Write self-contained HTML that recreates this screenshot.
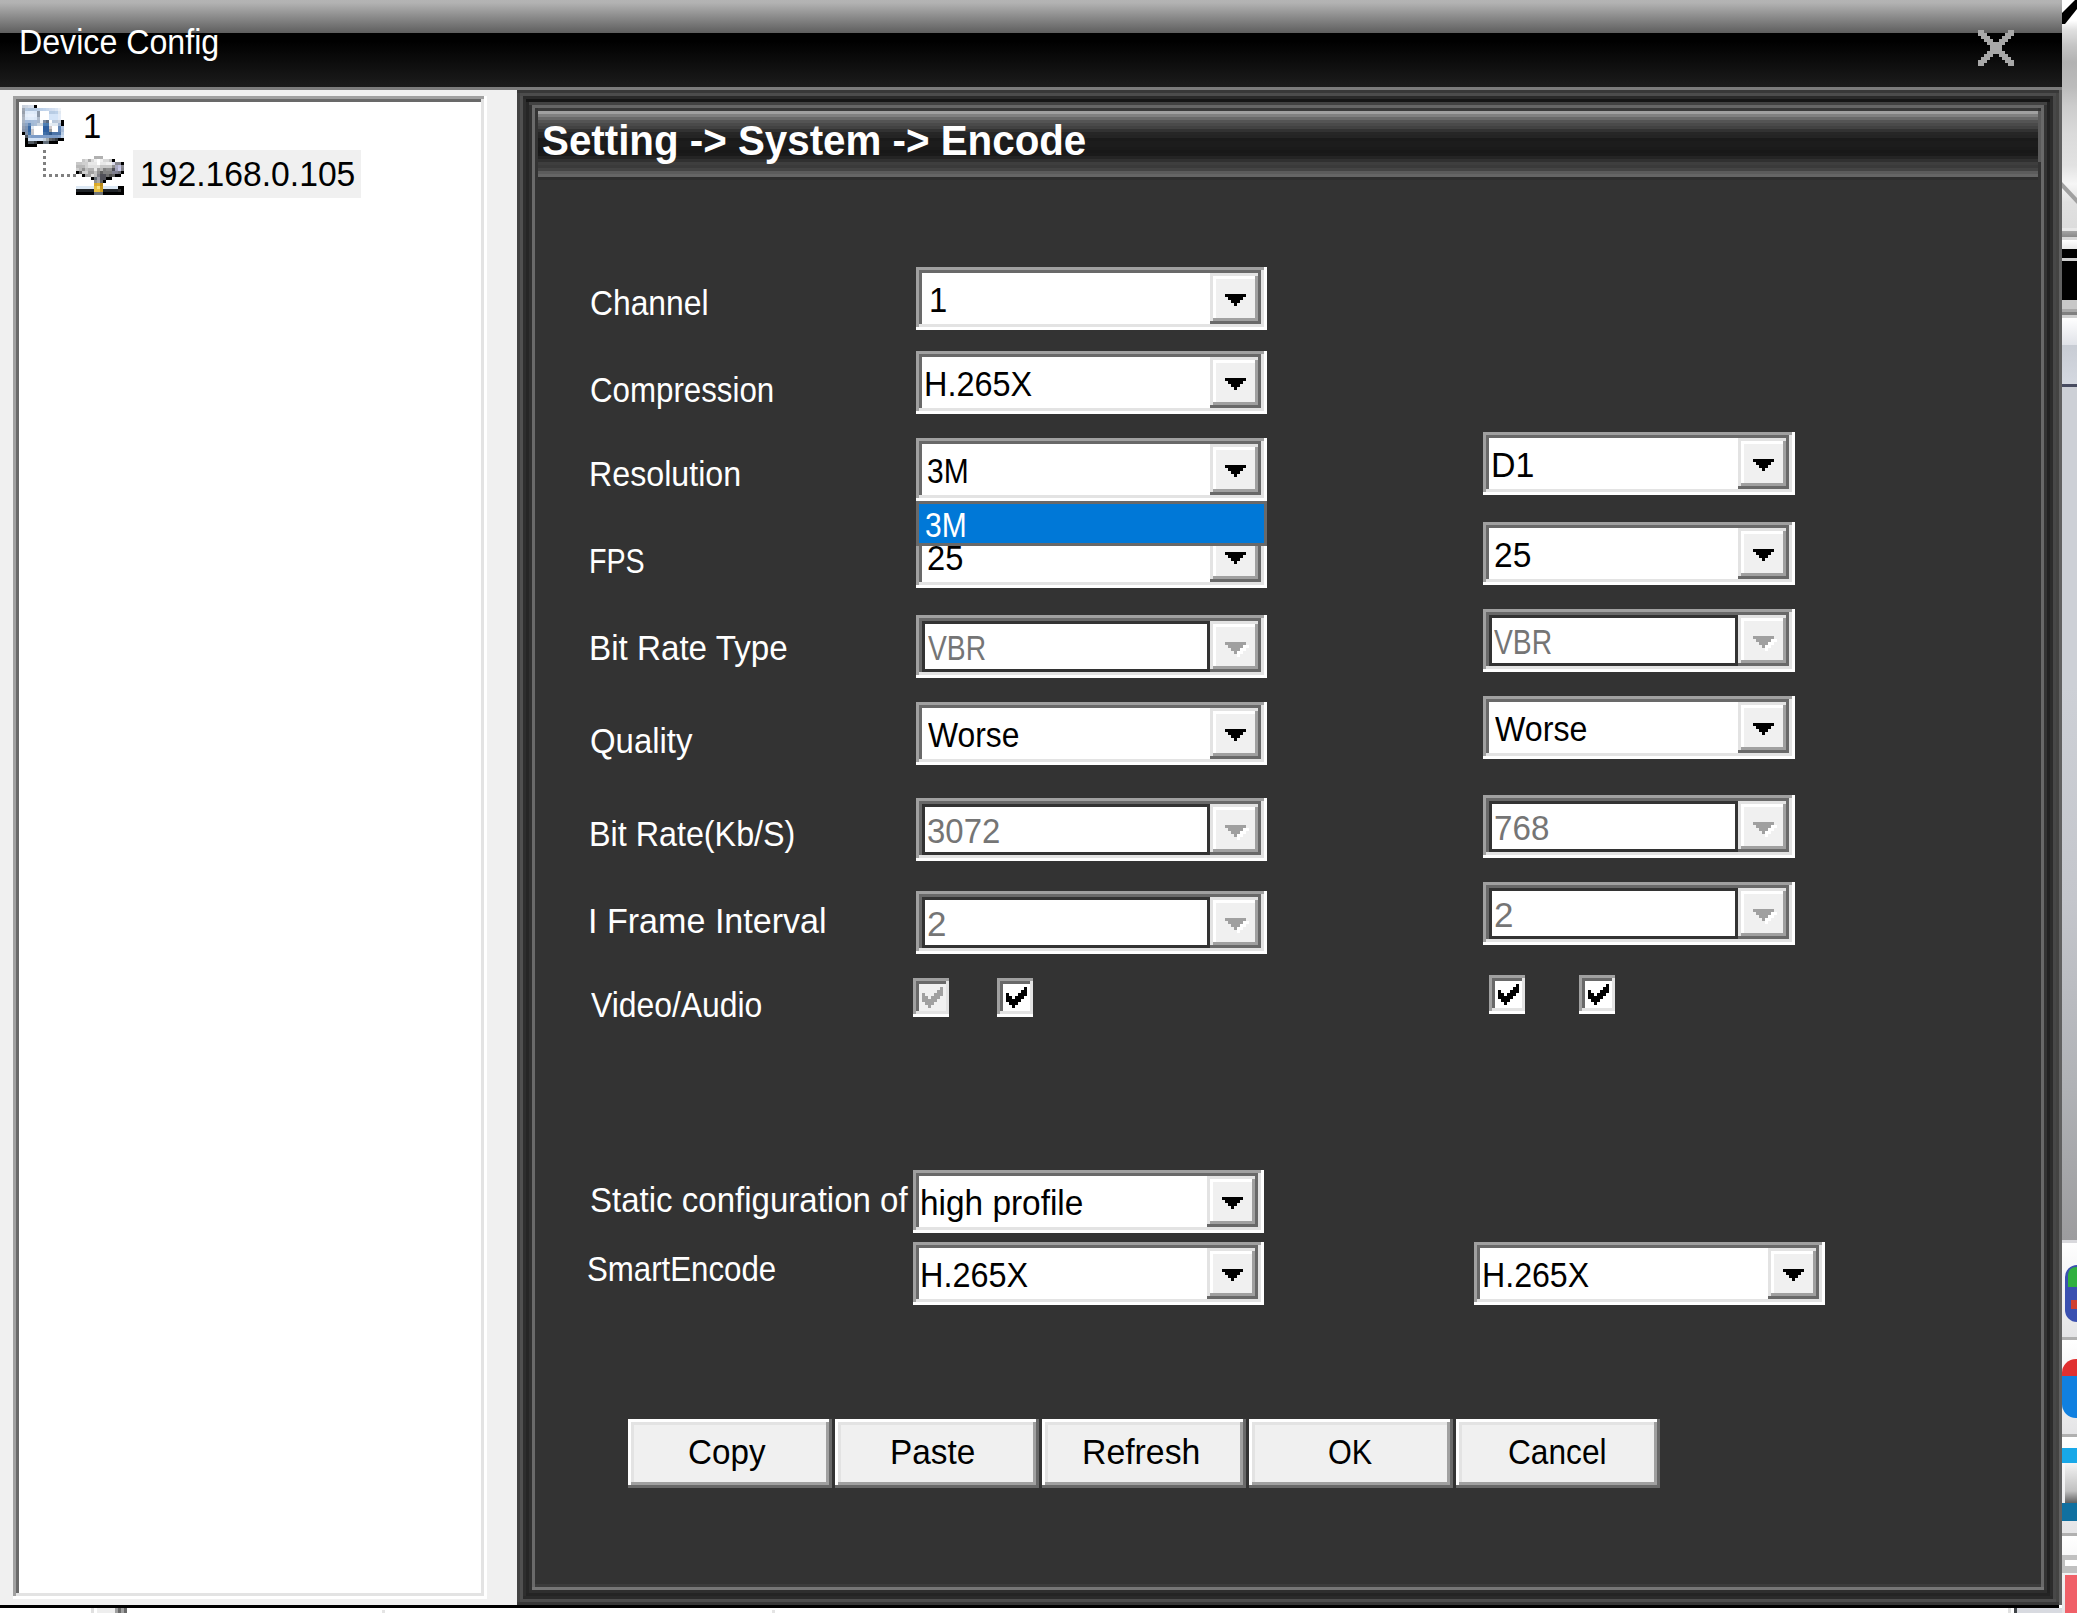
<!DOCTYPE html>
<html><head><meta charset="utf-8"><title>Device Config</title><style>
html,body{margin:0;padding:0}
body{width:2077px;height:1613px;overflow:hidden;background:#fff;position:relative;font-family:"Liberation Sans",sans-serif}
div,span.t,svg.a{position:absolute;display:block}
span.t{white-space:pre;transform-origin:0 0}
.sunk{box-shadow:inset -3px -3px 0 #fff,inset 3px 3px 0 #a0a0a0,inset -6px -6px 0 #e3e3e3,inset 6px 6px 0 #696969}
.rais{box-shadow:inset -3px -3px 0 #696969,inset 3px 3px 0 #e3e3e3,inset -6px -6px 0 #a0a0a0,inset 6px 6px 0 #fff}
.btn{box-shadow:inset -3px -3px 0 #696969,inset 3px 3px 0 #fff,inset -6px -6px 0 #a0a0a0,inset 6px 6px 0 #e3e3e3}
.chk{box-shadow:inset 0 -3px 0 #fff,inset 3px 3px 0 #a0a0a0,inset -3px -6px 0 #e3e3e3,inset 6px 6px 0 #696969}
</style></head><body>
<div style="left:0px;top:0px;width:2062px;height:33px;background:linear-gradient(#b4b4b4,#b2b2b2 9%,#5e5e5e);"></div>
<div style="left:0px;top:33px;width:2062px;height:54px;background:linear-gradient(#000,#000 15%,#1c1c1c);"></div>
<div style="left:0px;top:87px;width:2062px;height:3px;background:#7c7c7c;"></div>
<div style="left:0px;top:90px;width:517px;height:1515px;background:#f0f0f0;"></div>
<div class="sunk" style="left:13px;top:96px;width:474px;height:1503px;background:#fff;"></div>
<div style="left:517px;top:90px;width:1545px;height:1515px;background:#333;"></div>
<div style="left:517px;top:90px;width:3px;height:1515px;background:#424242;"></div>
<div style="left:520px;top:90px;width:3px;height:1515px;background:#505050;"></div>
<div style="left:523px;top:90px;width:3px;height:1515px;background:#2e2e2e;"></div>
<div style="left:526px;top:90px;width:3px;height:1515px;background:#262626;"></div>
<div style="left:529px;top:90px;width:3px;height:1515px;background:#303030;"></div>
<div style="left:532px;top:90px;width:3px;height:1515px;background:#6a6a6a;"></div>
<div style="left:2041px;top:90px;width:3px;height:1515px;background:#696969;"></div>
<div style="left:2044px;top:90px;width:3px;height:1515px;background:#343434;"></div>
<div style="left:2047px;top:90px;width:3px;height:1515px;background:#222222;"></div>
<div style="left:2050px;top:90px;width:3px;height:1515px;background:#2c2c2c;"></div>
<div style="left:2053px;top:90px;width:3px;height:1515px;background:#484848;"></div>
<div style="left:2056px;top:90px;width:3px;height:1515px;background:#444443;"></div>
<div style="left:2059px;top:90px;width:3px;height:1515px;background:#606060;"></div>
<div style="left:517px;top:90px;width:1542px;height:3px;background:#383838;"></div>
<div style="left:520px;top:93px;width:1536px;height:3px;background:#4c4c4c;"></div>
<div style="left:523px;top:96px;width:1530px;height:3px;background:#2a2a2a;"></div>
<div style="left:526px;top:99px;width:1524px;height:3px;background:#161616;"></div>
<div style="left:529px;top:102px;width:1518px;height:3px;background:#424242;"></div>
<div style="left:532px;top:105px;width:1512px;height:3px;background:#666666;"></div>
<div style="left:538px;top:108px;width:1500px;height:3px;background:#3a3a3a;"></div>
<div style="left:538px;top:111px;width:1500px;height:3px;background:#a0a0a0;"></div>
<div style="left:538px;top:114px;width:1500px;height:3px;background:#808080;"></div>
<div style="left:538px;top:117px;width:1500px;height:3px;background:#686868;"></div>
<div style="left:538px;top:120px;width:1500px;height:3px;background:#545454;"></div>
<div style="left:538px;top:123px;width:1500px;height:3px;background:#4a4a4a;"></div>
<div style="left:538px;top:126px;width:1500px;height:3px;background:#424242;"></div>
<div style="left:538px;top:129px;width:1500px;height:3px;background:#323232;"></div>
<div style="left:538px;top:132px;width:1500px;height:3px;background:#262626;"></div>
<div style="left:538px;top:135px;width:1500px;height:3px;background:#242424;"></div>
<div style="left:538px;top:138px;width:1500px;height:3px;background:#1a1a1a;"></div>
<div style="left:538px;top:141px;width:1500px;height:3px;background:#1c1c1c;"></div>
<div style="left:538px;top:144px;width:1500px;height:3px;background:#1c1c1c;"></div>
<div style="left:538px;top:147px;width:1500px;height:3px;background:#1a1a1a;"></div>
<div style="left:538px;top:150px;width:1500px;height:3px;background:#181818;"></div>
<div style="left:538px;top:153px;width:1500px;height:3px;background:#1a1a1a;"></div>
<div style="left:538px;top:156px;width:1500px;height:3px;background:#242424;"></div>
<div style="left:538px;top:159px;width:1500px;height:3px;background:#303030;"></div>
<div style="left:538px;top:162px;width:1500px;height:3px;background:#3e3e3e;"></div>
<div style="left:538px;top:165px;width:1500px;height:3px;background:#3a3a3a;"></div>
<div style="left:538px;top:168px;width:1500px;height:3px;background:#444444;"></div>
<div style="left:538px;top:171px;width:1500px;height:3px;background:#5c5c5c;"></div>
<div style="left:538px;top:174px;width:1500px;height:3px;background:#666666;"></div>
<div style="left:538px;top:177px;width:1500px;height:3px;background:#2e2e2e;"></div>
<div style="left:2038px;top:111px;width:3px;height:51px;background:#5a5a5a;"></div>
<div style="left:535px;top:1584px;width:1506px;height:3px;background:#3c3c3c;"></div>
<div style="left:532px;top:1587px;width:1512px;height:3px;background:#767676;"></div>
<div style="left:529px;top:1590px;width:1518px;height:3px;background:#2e2e2e;"></div>
<div style="left:526px;top:1593px;width:1524px;height:3px;background:#242424;"></div>
<div style="left:523px;top:1596px;width:1530px;height:3px;background:#2a2a2a;"></div>
<div style="left:520px;top:1599px;width:1536px;height:3px;background:#4e4e4e;"></div>
<div style="left:517px;top:1602px;width:1542px;height:3px;background:#383838;"></div>
<div style="left:0px;top:1605px;width:2059px;height:3px;background:#000;"></div>
<div style="left:91px;top:1608px;width:3px;height:5px;background:#e0e0e0;"></div>
<div style="left:97px;top:1608px;width:18px;height:5px;background:#eeeeee;"></div>
<div style="left:115px;top:1608px;width:3px;height:5px;background:#a0a0a0;"></div>
<div style="left:118px;top:1608px;width:3px;height:5px;background:#696969;"></div>
<div style="left:121px;top:1608px;width:3px;height:5px;background:#a0a0a0;"></div>
<div style="left:124px;top:1608px;width:3px;height:5px;background:#696969;"></div>
<div style="left:382px;top:1610px;width:3px;height:3px;background:#e4e4e4;"></div>
<div style="left:772px;top:1610px;width:3px;height:3px;background:#e4e4e4;"></div>
<div style="left:2008px;top:1608px;width:3px;height:5px;background:#e0e0e0;"></div>
<div style="left:2014px;top:1608px;width:3px;height:5px;background:#404448;"></div>
<div style="left:2017px;top:1608px;width:45px;height:5px;background:#d8dae0;"></div>
<svg class="a" style="left:1978px;top:30px" width="36" height="36" shape-rendering="crispEdges"><path d="M0 0h6v3h-6zM30 0h6v3h-6zM0 3h9v3h-9zM27 3h9v3h-9zM3 6h9v3h-9zM24 6h9v3h-9zM6 9h9v3h-9zM21 9h9v3h-9zM9 12h18v3h-18zM12 15h12v3h-12zM12 18h12v3h-12zM9 21h18v3h-18zM6 24h9v3h-9zM21 24h9v3h-9zM3 27h9v3h-9zM24 27h9v3h-9zM0 30h9v3h-9zM27 30h9v3h-9zM0 33h6v3h-6zM30 33h6v3h-6z" fill="#a8a8a8"/></svg>
<div style="left:133px;top:150px;width:228px;height:48px;background:#f0f0f0;"></div>
<svg class="a" style="left:0;top:0" width="100" height="200" shape-rendering="crispEdges"><path d="M43 150h3v3h-3zM43 156h3v3h-3zM43 162h3v3h-3zM43 168h3v3h-3zM43 174h3v3h-3zM49 174h3v3h-3zM55 174h3v3h-3zM61 174h3v3h-3zM67 174h3v3h-3zM73 174h3v3h-3z" fill="#808080"/></svg>
<svg class="a" style="left:22px;top:105px" width="42" height="42" shape-rendering="crispEdges"><rect x="0" y="0" width="3" height="3" fill="#c8d0dc"/><rect x="3" y="0" width="3" height="3" fill="#ccd4e0"/><rect x="6" y="0" width="3" height="3" fill="#d4dce8"/><rect x="9" y="0" width="3" height="3" fill="#d8e0ec"/><rect x="12" y="0" width="3" height="3" fill="#000000"/><rect x="0" y="3" width="3" height="3" fill="#a0a8b4"/><rect x="3" y="3" width="3" height="3" fill="#b4c8e0"/><rect x="6" y="3" width="3" height="3" fill="#b0c4dc"/><rect x="9" y="3" width="3" height="3" fill="#b0c4dc"/><rect x="12" y="3" width="3" height="3" fill="#b4c8e0"/><rect x="15" y="3" width="3" height="3" fill="#b8cce4"/><rect x="18" y="3" width="3" height="3" fill="#bcd0e8"/><rect x="21" y="3" width="3" height="3" fill="#c0d4ec"/><rect x="24" y="3" width="3" height="3" fill="#c8d8ec"/><rect x="27" y="3" width="3" height="3" fill="#d0dcf0"/><rect x="30" y="3" width="3" height="3" fill="#d4e0f0"/><rect x="33" y="3" width="3" height="3" fill="#dce6f4"/><rect x="36" y="3" width="3" height="3" fill="#eef2f8"/><rect x="0" y="6" width="3" height="3" fill="#98a0ac"/><rect x="3" y="6" width="3" height="3" fill="#dce8f8"/><rect x="6" y="6" width="3" height="3" fill="#e0ecfa"/><rect x="9" y="6" width="3" height="3" fill="#e0ecfa"/><rect x="12" y="6" width="3" height="3" fill="#dce8f8"/><rect x="15" y="6" width="3" height="3" fill="#8c98a8"/><rect x="18" y="6" width="3" height="3" fill="#ffffff"/><rect x="21" y="6" width="3" height="3" fill="#ffffff"/><rect x="24" y="6" width="3" height="3" fill="#ffffff"/><rect x="27" y="6" width="3" height="3" fill="#b8cce4"/><rect x="30" y="6" width="3" height="3" fill="#b8cce4"/><rect x="33" y="6" width="3" height="3" fill="#bcd0e8"/><rect x="36" y="6" width="3" height="3" fill="#e0e8f0"/><rect x="0" y="9" width="3" height="3" fill="#a8b0bc"/><rect x="3" y="9" width="3" height="3" fill="#e4eefa"/><rect x="6" y="9" width="3" height="3" fill="#e8f0fc"/><rect x="9" y="9" width="3" height="3" fill="#e8f0fc"/><rect x="12" y="9" width="3" height="3" fill="#e4eefa"/><rect x="15" y="9" width="3" height="3" fill="#8c98a8"/><rect x="18" y="9" width="3" height="3" fill="#ffffff"/><rect x="21" y="9" width="3" height="3" fill="#ffffff"/><rect x="24" y="9" width="3" height="3" fill="#ffffff"/><rect x="27" y="9" width="3" height="3" fill="#d4e4f8"/><rect x="30" y="9" width="3" height="3" fill="#d4e4f8"/><rect x="33" y="9" width="3" height="3" fill="#d4e4f8"/><rect x="36" y="9" width="3" height="3" fill="#e4ecf8"/><rect x="0" y="12" width="3" height="3" fill="#b0b8c4"/><rect x="3" y="12" width="3" height="3" fill="#dce8f8"/><rect x="6" y="12" width="3" height="3" fill="#e0ecfa"/><rect x="9" y="12" width="3" height="3" fill="#e0ecfa"/><rect x="12" y="12" width="3" height="3" fill="#dce8f8"/><rect x="15" y="12" width="3" height="3" fill="#b0bccc"/><rect x="18" y="12" width="3" height="3" fill="#ffffff"/><rect x="21" y="12" width="3" height="3" fill="#ffffff"/><rect x="24" y="12" width="3" height="3" fill="#ffffff"/><rect x="27" y="12" width="3" height="3" fill="#d4e4f8"/><rect x="30" y="12" width="3" height="3" fill="#d4e4f8"/><rect x="33" y="12" width="3" height="3" fill="#d4e4f8"/><rect x="36" y="12" width="3" height="3" fill="#e4ecf8"/><rect x="0" y="15" width="3" height="3" fill="#a8b4c4"/><rect x="3" y="15" width="3" height="3" fill="#a0b8d8"/><rect x="6" y="15" width="3" height="3" fill="#a0b8d8"/><rect x="9" y="15" width="3" height="3" fill="#a4bcd8"/><rect x="12" y="15" width="3" height="3" fill="#a8bcd8"/><rect x="15" y="15" width="3" height="3" fill="#a8b8cc"/><rect x="18" y="15" width="3" height="3" fill="#f0f4f8"/><rect x="21" y="15" width="3" height="3" fill="#7888a0"/><rect x="24" y="15" width="3" height="3" fill="#5c6c80"/><rect x="27" y="15" width="3" height="3" fill="#ffffff"/><rect x="30" y="15" width="3" height="3" fill="#b8c8dc"/><rect x="33" y="15" width="3" height="3" fill="#bcc8d8"/><rect x="36" y="15" width="3" height="3" fill="#c8d0dc"/><rect x="39" y="15" width="3" height="3" fill="#000000"/><rect x="0" y="18" width="3" height="3" fill="#98a8bc"/><rect x="3" y="18" width="3" height="3" fill="#8ca4c4"/><rect x="6" y="18" width="3" height="3" fill="#6088b8"/><rect x="9" y="18" width="3" height="3" fill="#a0b8d4"/><rect x="12" y="18" width="3" height="3" fill="#a8bcd4"/><rect x="15" y="18" width="3" height="3" fill="#c8d4e0"/><rect x="18" y="18" width="3" height="3" fill="#ccd4dc"/><rect x="21" y="18" width="3" height="3" fill="#5080b4"/><rect x="24" y="18" width="3" height="3" fill="#4c7cb0"/><rect x="27" y="18" width="3" height="3" fill="#e8eef4"/><rect x="30" y="18" width="3" height="3" fill="#e0e8f0"/><rect x="33" y="18" width="3" height="3" fill="#e0e8f0"/><rect x="36" y="18" width="3" height="3" fill="#a0b4d0"/><rect x="39" y="18" width="3" height="3" fill="#000000"/><rect x="0" y="21" width="3" height="3" fill="#909cb0"/><rect x="3" y="21" width="3" height="3" fill="#7c94b4"/><rect x="6" y="21" width="3" height="3" fill="#3868a4"/><rect x="9" y="21" width="3" height="3" fill="#e0e8f0"/><rect x="12" y="21" width="3" height="3" fill="#ffffff"/><rect x="15" y="21" width="3" height="3" fill="#ffffff"/><rect x="18" y="21" width="3" height="3" fill="#ffffff"/><rect x="21" y="21" width="3" height="3" fill="#3060a0"/><rect x="24" y="21" width="3" height="3" fill="#3060a0"/><rect x="27" y="21" width="3" height="3" fill="#d0c8c8"/><rect x="30" y="21" width="3" height="3" fill="#ffffff"/><rect x="33" y="21" width="3" height="3" fill="#ffffff"/><rect x="36" y="21" width="3" height="3" fill="#6084b4"/><rect x="39" y="21" width="3" height="3" fill="#b0c4e0"/><rect x="0" y="24" width="3" height="3" fill="#8894a8"/><rect x="3" y="24" width="3" height="3" fill="#7890b0"/><rect x="6" y="24" width="3" height="3" fill="#3868a4"/><rect x="9" y="24" width="3" height="3" fill="#c8c8cc"/><rect x="12" y="24" width="3" height="3" fill="#ffffff"/><rect x="15" y="24" width="3" height="3" fill="#ffffff"/><rect x="18" y="24" width="3" height="3" fill="#ffffff"/><rect x="21" y="24" width="3" height="3" fill="#3060a0"/><rect x="24" y="24" width="3" height="3" fill="#3060a0"/><rect x="27" y="24" width="3" height="3" fill="#a0a0a0"/><rect x="30" y="24" width="3" height="3" fill="#ffffff"/><rect x="33" y="24" width="3" height="3" fill="#ffffff"/><rect x="36" y="24" width="3" height="3" fill="#6084b4"/><rect x="39" y="24" width="3" height="3" fill="#a8bcd8"/><rect x="0" y="27" width="3" height="3" fill="#000000"/><rect x="3" y="27" width="3" height="3" fill="#8090a8"/><rect x="6" y="27" width="3" height="3" fill="#4878ac"/><rect x="9" y="27" width="3" height="3" fill="#c0c4cc"/><rect x="12" y="27" width="3" height="3" fill="#ffffff"/><rect x="15" y="27" width="3" height="3" fill="#ffffff"/><rect x="18" y="27" width="3" height="3" fill="#ffffff"/><rect x="21" y="27" width="3" height="3" fill="#4070a8"/><rect x="24" y="27" width="3" height="3" fill="#3c68a0"/><rect x="27" y="27" width="3" height="3" fill="#305888"/><rect x="30" y="27" width="3" height="3" fill="#4c74a8"/><rect x="33" y="27" width="3" height="3" fill="#4c74a8"/><rect x="36" y="27" width="3" height="3" fill="#4c74a8"/><rect x="39" y="27" width="3" height="3" fill="#b8cce4"/><rect x="3" y="30" width="3" height="3" fill="#505860"/><rect x="6" y="30" width="3" height="3" fill="#88a4c8"/><rect x="9" y="30" width="3" height="3" fill="#7c9cc8"/><rect x="12" y="30" width="3" height="3" fill="#7c9cc8"/><rect x="15" y="30" width="3" height="3" fill="#7c9cc8"/><rect x="18" y="30" width="3" height="3" fill="#7c9cc8"/><rect x="21" y="30" width="3" height="3" fill="#7c9cc8"/><rect x="24" y="30" width="3" height="3" fill="#7c9cc8"/><rect x="27" y="30" width="3" height="3" fill="#7c9cc8"/><rect x="30" y="30" width="3" height="3" fill="#7c9cc8"/><rect x="33" y="30" width="3" height="3" fill="#7c9cc8"/><rect x="36" y="30" width="3" height="3" fill="#88a4cc"/><rect x="39" y="30" width="3" height="3" fill="#c8d8ec"/><rect x="3" y="33" width="3" height="3" fill="#000000"/><rect x="6" y="33" width="3" height="3" fill="#d0e0f4"/><rect x="9" y="33" width="3" height="3" fill="#d0e0f4"/><rect x="12" y="33" width="3" height="3" fill="#d0e0f4"/><rect x="15" y="33" width="3" height="3" fill="#d0e0f4"/><rect x="18" y="33" width="3" height="3" fill="#d0e0f4"/><rect x="21" y="33" width="3" height="3" fill="#c0ccd8"/><rect x="24" y="33" width="3" height="3" fill="#a0a8ac"/><rect x="27" y="33" width="3" height="3" fill="#606468"/><rect x="30" y="33" width="3" height="3" fill="#50545c"/><rect x="33" y="33" width="3" height="3" fill="#383c40"/><rect x="36" y="33" width="3" height="3" fill="#000000"/><rect x="39" y="33" width="3" height="3" fill="#000000"/><rect x="3" y="36" width="3" height="3" fill="#000000"/><rect x="6" y="36" width="3" height="3" fill="#505860"/><rect x="9" y="36" width="3" height="3" fill="#505860"/><rect x="12" y="36" width="3" height="3" fill="#303438"/><rect x="15" y="36" width="3" height="3" fill="#000000"/><rect x="18" y="36" width="3" height="3" fill="#000000"/><rect x="21" y="36" width="3" height="3" fill="#606c78"/><rect x="24" y="36" width="3" height="3" fill="#606c78"/><rect x="27" y="36" width="3" height="3" fill="#000000"/><rect x="30" y="36" width="3" height="3" fill="#000000"/><rect x="33" y="36" width="3" height="3" fill="#000000"/><rect x="3" y="39" width="3" height="3" fill="#000000"/><rect x="6" y="39" width="3" height="3" fill="#000000"/><rect x="9" y="39" width="3" height="3" fill="#000000"/><rect x="12" y="39" width="3" height="3" fill="#000000"/></svg>
<svg class="a" style="left:76px;top:156px" width="48" height="39" shape-rendering="crispEdges"><rect x="18" y="0" width="3" height="3" fill="#b0b0b0"/><rect x="21" y="0" width="3" height="3" fill="#b0b0b0"/><rect x="24" y="0" width="3" height="3" fill="#b0b0b0"/><rect x="6" y="3" width="3" height="3" fill="#c8c8c8"/><rect x="9" y="3" width="3" height="3" fill="#d8d8d8"/><rect x="12" y="3" width="3" height="3" fill="#a8a8a8"/><rect x="15" y="3" width="3" height="3" fill="#d8d8d8"/><rect x="18" y="3" width="3" height="3" fill="#f0f0f0"/><rect x="21" y="3" width="3" height="3" fill="#ffffff"/><rect x="24" y="3" width="3" height="3" fill="#f0f0f0"/><rect x="27" y="3" width="3" height="3" fill="#d8d8d8"/><rect x="30" y="3" width="3" height="3" fill="#d8d8d8"/><rect x="33" y="3" width="3" height="3" fill="#c0c0c0"/><rect x="36" y="3" width="3" height="3" fill="#000000"/><rect x="0" y="6" width="3" height="3" fill="#c8c8c8"/><rect x="3" y="6" width="3" height="3" fill="#c8c8c8"/><rect x="6" y="6" width="3" height="3" fill="#d0d0d0"/><rect x="9" y="6" width="3" height="3" fill="#d0d0d0"/><rect x="12" y="6" width="3" height="3" fill="#e8e8e8"/><rect x="15" y="6" width="3" height="3" fill="#e8e8e8"/><rect x="18" y="6" width="3" height="3" fill="#e8e8e8"/><rect x="21" y="6" width="3" height="3" fill="#ffffff"/><rect x="24" y="6" width="3" height="3" fill="#e8e8e8"/><rect x="27" y="6" width="3" height="3" fill="#e8e8e8"/><rect x="30" y="6" width="3" height="3" fill="#f0f0f0"/><rect x="33" y="6" width="3" height="3" fill="#f0f0f0"/><rect x="36" y="6" width="3" height="3" fill="#d8d8e8"/><rect x="39" y="6" width="3" height="3" fill="#888890"/><rect x="42" y="6" width="3" height="3" fill="#888890"/><rect x="45" y="6" width="3" height="3" fill="#000000"/><rect x="0" y="9" width="3" height="3" fill="#b8b8b8"/><rect x="3" y="9" width="3" height="3" fill="#b8b8b8"/><rect x="6" y="9" width="3" height="3" fill="#b8b8b8"/><rect x="9" y="9" width="3" height="3" fill="#d0d0d0"/><rect x="12" y="9" width="3" height="3" fill="#e0e0e0"/><rect x="15" y="9" width="3" height="3" fill="#e0e0e0"/><rect x="18" y="9" width="3" height="3" fill="#e0e0e0"/><rect x="21" y="9" width="3" height="3" fill="#e0e0e0"/><rect x="24" y="9" width="3" height="3" fill="#c8c8c8"/><rect x="27" y="9" width="3" height="3" fill="#c8c8c8"/><rect x="30" y="9" width="3" height="3" fill="#c8c8c8"/><rect x="33" y="9" width="3" height="3" fill="#c8c8c8"/><rect x="36" y="9" width="3" height="3" fill="#909090"/><rect x="39" y="9" width="3" height="3" fill="#a8a8c0"/><rect x="42" y="9" width="3" height="3" fill="#c0c0e0"/><rect x="45" y="9" width="3" height="3" fill="#888890"/><rect x="0" y="12" width="3" height="3" fill="#d0d0d0"/><rect x="3" y="12" width="3" height="3" fill="#b8b8b8"/><rect x="6" y="12" width="3" height="3" fill="#909090"/><rect x="9" y="12" width="3" height="3" fill="#c0c0c0"/><rect x="12" y="12" width="3" height="3" fill="#b0b0b0"/><rect x="15" y="12" width="3" height="3" fill="#b0b0b0"/><rect x="18" y="12" width="3" height="3" fill="#e8e8e8"/><rect x="21" y="12" width="3" height="3" fill="#a0a0a0"/><rect x="24" y="12" width="3" height="3" fill="#b8b8b8"/><rect x="27" y="12" width="3" height="3" fill="#808080"/><rect x="30" y="12" width="3" height="3" fill="#909090"/><rect x="33" y="12" width="3" height="3" fill="#909090"/><rect x="36" y="12" width="3" height="3" fill="#505058"/><rect x="39" y="12" width="3" height="3" fill="#a0a0b8"/><rect x="42" y="12" width="3" height="3" fill="#c8c8e8"/><rect x="45" y="12" width="3" height="3" fill="#808088"/><rect x="0" y="15" width="3" height="3" fill="#000000"/><rect x="3" y="15" width="3" height="3" fill="#606060"/><rect x="6" y="15" width="3" height="3" fill="#d0d0d0"/><rect x="9" y="15" width="3" height="3" fill="#d0d0d0"/><rect x="12" y="15" width="3" height="3" fill="#a0a0a0"/><rect x="15" y="15" width="3" height="3" fill="#a0a0a0"/><rect x="18" y="15" width="3" height="3" fill="#c0c0c0"/><rect x="21" y="15" width="3" height="3" fill="#909090"/><rect x="24" y="15" width="3" height="3" fill="#606060"/><rect x="27" y="15" width="3" height="3" fill="#808080"/><rect x="30" y="15" width="3" height="3" fill="#808080"/><rect x="33" y="15" width="3" height="3" fill="#808080"/><rect x="36" y="15" width="3" height="3" fill="#808090"/><rect x="39" y="15" width="3" height="3" fill="#808090"/><rect x="42" y="15" width="3" height="3" fill="#707078"/><rect x="45" y="15" width="3" height="3" fill="#000000"/><rect x="6" y="18" width="3" height="3" fill="#000000"/><rect x="9" y="18" width="3" height="3" fill="#a0a0a0"/><rect x="12" y="18" width="3" height="3" fill="#a0a0a0"/><rect x="15" y="18" width="3" height="3" fill="#e0e0e0"/><rect x="18" y="18" width="3" height="3" fill="#c0c0c0"/><rect x="21" y="18" width="3" height="3" fill="#808088"/><rect x="24" y="18" width="3" height="3" fill="#505058"/><rect x="27" y="18" width="3" height="3" fill="#505058"/><rect x="30" y="18" width="3" height="3" fill="#707070"/><rect x="33" y="18" width="3" height="3" fill="#505050"/><rect x="36" y="18" width="3" height="3" fill="#606060"/><rect x="39" y="18" width="3" height="3" fill="#000000"/><rect x="42" y="18" width="3" height="3" fill="#000000"/><rect x="15" y="21" width="3" height="3" fill="#000000"/><rect x="18" y="21" width="3" height="3" fill="#606870"/><rect x="21" y="21" width="3" height="3" fill="#a0a0a8"/><rect x="24" y="21" width="3" height="3" fill="#505058"/><rect x="27" y="21" width="3" height="3" fill="#505058"/><rect x="30" y="21" width="3" height="3" fill="#000000"/><rect x="33" y="21" width="3" height="3" fill="#000000"/><rect x="18" y="24" width="3" height="3" fill="#909090"/><rect x="21" y="24" width="3" height="3" fill="#a8a8a8"/><rect x="24" y="24" width="3" height="3" fill="#606060"/><rect x="27" y="24" width="3" height="3" fill="#000000"/><rect x="18" y="27" width="3" height="3" fill="#d8a828"/><rect x="21" y="27" width="3" height="3" fill="#e0b030"/><rect x="24" y="27" width="3" height="3" fill="#b88818"/><rect x="0" y="30" width="3" height="3" fill="#dce8f4"/><rect x="3" y="30" width="3" height="3" fill="#dce8f4"/><rect x="6" y="30" width="3" height="3" fill="#dce8f4"/><rect x="9" y="30" width="3" height="3" fill="#dce8f4"/><rect x="12" y="30" width="3" height="3" fill="#dce8f4"/><rect x="15" y="30" width="3" height="3" fill="#dce8f4"/><rect x="18" y="30" width="3" height="3" fill="#e8c040"/><rect x="21" y="30" width="3" height="3" fill="#f8e080"/><rect x="24" y="30" width="3" height="3" fill="#c89820"/><rect x="27" y="30" width="3" height="3" fill="#dce8f4"/><rect x="30" y="30" width="3" height="3" fill="#dce8f4"/><rect x="33" y="30" width="3" height="3" fill="#dce8f4"/><rect x="36" y="30" width="3" height="3" fill="#dce8f4"/><rect x="39" y="30" width="3" height="3" fill="#dce8f4"/><rect x="42" y="30" width="3" height="3" fill="#000000"/><rect x="45" y="30" width="3" height="3" fill="#000000"/><rect x="0" y="33" width="3" height="3" fill="#202428"/><rect x="3" y="33" width="3" height="3" fill="#202428"/><rect x="6" y="33" width="3" height="3" fill="#202428"/><rect x="9" y="33" width="3" height="3" fill="#202428"/><rect x="12" y="33" width="3" height="3" fill="#202428"/><rect x="15" y="33" width="3" height="3" fill="#202428"/><rect x="18" y="33" width="3" height="3" fill="#e8c040"/><rect x="21" y="33" width="3" height="3" fill="#e8c040"/><rect x="24" y="33" width="3" height="3" fill="#d0a020"/><rect x="27" y="33" width="3" height="3" fill="#202428"/><rect x="30" y="33" width="3" height="3" fill="#202428"/><rect x="33" y="33" width="3" height="3" fill="#202428"/><rect x="36" y="33" width="3" height="3" fill="#202428"/><rect x="39" y="33" width="3" height="3" fill="#202428"/><rect x="42" y="33" width="3" height="3" fill="#303030"/><rect x="45" y="33" width="3" height="3" fill="#000000"/><rect x="0" y="36" width="3" height="3" fill="#000000"/><rect x="3" y="36" width="3" height="3" fill="#000000"/><rect x="6" y="36" width="3" height="3" fill="#000000"/><rect x="9" y="36" width="3" height="3" fill="#000000"/><rect x="12" y="36" width="3" height="3" fill="#000000"/><rect x="15" y="36" width="3" height="3" fill="#000000"/><rect x="18" y="36" width="3" height="3" fill="#707478"/><rect x="21" y="36" width="3" height="3" fill="#707478"/><rect x="24" y="36" width="3" height="3" fill="#707478"/><rect x="27" y="36" width="3" height="3" fill="#000000"/><rect x="30" y="36" width="3" height="3" fill="#000000"/><rect x="33" y="36" width="3" height="3" fill="#000000"/><rect x="36" y="36" width="3" height="3" fill="#000000"/><rect x="39" y="36" width="3" height="3" fill="#000000"/><rect x="42" y="36" width="3" height="3" fill="#000000"/><rect x="45" y="36" width="3" height="3" fill="#000000"/></svg>
<span class="t" style="left:19.16px;top:24.37px;font-size:35px;line-height:35px;color:#ffffff;font-weight:400;transform:scaleX(0.9188);">Device Config</span>
<span class="t" style="left:542.04px;top:120.45px;font-size:42px;line-height:42px;color:#ffffff;font-weight:700;transform:scaleX(0.9597);">Setting -&gt; System -&gt; Encode</span>
<span class="t" style="left:83.12px;top:108.37px;font-size:35px;line-height:35px;color:#000000;font-weight:400;transform:scaleX(0.9375);">1</span>
<span class="t" style="left:140.08px;top:156.37px;font-size:35px;line-height:35px;color:#000000;font-weight:400;transform:scaleX(0.9621);">192.168.0.105</span>
<span class="t" style="left:590.09px;top:285.37px;font-size:35px;line-height:35px;color:#ffffff;font-weight:400;transform:scaleX(0.9091);">Channel</span>
<span class="t" style="left:590.11px;top:372.37px;font-size:35px;line-height:35px;color:#ffffff;font-weight:400;transform:scaleX(0.8934);">Compression</span>
<span class="t" style="left:589.16px;top:456.37px;font-size:35px;line-height:35px;color:#ffffff;font-weight:400;transform:scaleX(0.9202);">Resolution</span>
<span class="t" style="left:589.36px;top:543.37px;font-size:35px;line-height:35px;color:#ffffff;font-weight:400;transform:scaleX(0.8189);">FPS</span>
<span class="t" style="left:589.10px;top:630.37px;font-size:35px;line-height:35px;color:#ffffff;font-weight:400;transform:scaleX(0.9485);">Bit Rate Type</span>
<span class="t" style="left:590.06px;top:723.37px;font-size:35px;line-height:35px;color:#ffffff;font-weight:400;transform:scaleX(0.9407);">Quality</span>
<span class="t" style="left:589.15px;top:816.37px;font-size:35px;line-height:35px;color:#ffffff;font-weight:400;transform:scaleX(0.9226);">Bit Rate(Kb/S)</span>
<span class="t" style="left:588.08px;top:903.37px;font-size:35px;line-height:35px;color:#ffffff;font-weight:400;transform:scaleX(0.9738);">I Frame Interval</span>
<span class="t" style="left:591.00px;top:987.37px;font-size:35px;line-height:35px;color:#ffffff;font-weight:400;transform:scaleX(0.9107);">Video/Audio</span>
<span class="t" style="left:590.06px;top:1182.37px;font-size:35px;line-height:35px;color:#ffffff;font-weight:400;transform:scaleX(0.9438);">Static configuration of</span>
<span class="t" style="left:587.11px;top:1251.37px;font-size:35px;line-height:35px;color:#ffffff;font-weight:400;transform:scaleX(0.8922);">SmartEncode</span>
<div class="sunk" style="left:916px;top:267px;width:351px;height:63px;background:#fff;"></div>
<div class="rais" style="left:1210px;top:273px;width:51px;height:51px;background:#f0f0f0;"></div>
<svg class="a" style="left:1225px;top:294px" width="21" height="12" shape-rendering="crispEdges"><path d="M0 0h21v3h-3v3h-3v3h-3v3h-3v-3h-3v-3h-3v-3h-3z" fill="#000"/></svg>
<div class="sunk" style="left:916px;top:351px;width:351px;height:63px;background:#fff;"></div>
<div class="rais" style="left:1210px;top:357px;width:51px;height:51px;background:#f0f0f0;"></div>
<svg class="a" style="left:1225px;top:378px" width="21" height="12" shape-rendering="crispEdges"><path d="M0 0h21v3h-3v3h-3v3h-3v3h-3v-3h-3v-3h-3v-3h-3z" fill="#000"/></svg>
<div class="sunk" style="left:916px;top:438px;width:351px;height:63px;background:#fff;"></div>
<div class="rais" style="left:1210px;top:444px;width:51px;height:51px;background:#f0f0f0;"></div>
<svg class="a" style="left:1225px;top:465px" width="21" height="12" shape-rendering="crispEdges"><path d="M0 0h21v3h-3v3h-3v3h-3v3h-3v-3h-3v-3h-3v-3h-3z" fill="#000"/></svg>
<div class="sunk" style="left:916px;top:525px;width:351px;height:63px;background:#fff;"></div>
<div class="rais" style="left:1210px;top:531px;width:51px;height:51px;background:#f0f0f0;"></div>
<svg class="a" style="left:1225px;top:552px" width="21" height="12" shape-rendering="crispEdges"><path d="M0 0h21v3h-3v3h-3v3h-3v3h-3v-3h-3v-3h-3v-3h-3z" fill="#000"/></svg>
<div class="sunk" style="left:916px;top:615px;width:351px;height:63px;background:#fff;"></div>
<div style="left:922px;top:621px;width:288px;height:51px;background:#333;"></div>
<div style="left:925px;top:624px;width:282px;height:45px;background:#fff;"></div>
<div class="rais" style="left:1210px;top:621px;width:51px;height:51px;background:#f0f0f0;"></div>
<svg class="a" style="left:1225px;top:642px" width="24" height="15" shape-rendering="crispEdges"><path d="M0 0h21v3h-3v3h-3v3h-3v3h-3v-3h-3v-3h-3v-3h-3z" transform="translate(3,3)" fill="#fff"/><path d="M0 0h21v3h-3v3h-3v3h-3v3h-3v-3h-3v-3h-3v-3h-3z" fill="#a0a0a0"/></svg>
<div class="sunk" style="left:916px;top:702px;width:351px;height:63px;background:#fff;"></div>
<div class="rais" style="left:1210px;top:708px;width:51px;height:51px;background:#f0f0f0;"></div>
<svg class="a" style="left:1225px;top:729px" width="21" height="12" shape-rendering="crispEdges"><path d="M0 0h21v3h-3v3h-3v3h-3v3h-3v-3h-3v-3h-3v-3h-3z" fill="#000"/></svg>
<div class="sunk" style="left:916px;top:798px;width:351px;height:63px;background:#fff;"></div>
<div style="left:922px;top:804px;width:288px;height:51px;background:#333;"></div>
<div style="left:925px;top:807px;width:282px;height:45px;background:#fff;"></div>
<div class="rais" style="left:1210px;top:804px;width:51px;height:51px;background:#f0f0f0;"></div>
<svg class="a" style="left:1225px;top:825px" width="24" height="15" shape-rendering="crispEdges"><path d="M0 0h21v3h-3v3h-3v3h-3v3h-3v-3h-3v-3h-3v-3h-3z" transform="translate(3,3)" fill="#fff"/><path d="M0 0h21v3h-3v3h-3v3h-3v3h-3v-3h-3v-3h-3v-3h-3z" fill="#a0a0a0"/></svg>
<div class="sunk" style="left:916px;top:891px;width:351px;height:63px;background:#fff;"></div>
<div style="left:922px;top:897px;width:288px;height:51px;background:#333;"></div>
<div style="left:925px;top:900px;width:282px;height:45px;background:#fff;"></div>
<div class="rais" style="left:1210px;top:897px;width:51px;height:51px;background:#f0f0f0;"></div>
<svg class="a" style="left:1225px;top:918px" width="24" height="15" shape-rendering="crispEdges"><path d="M0 0h21v3h-3v3h-3v3h-3v3h-3v-3h-3v-3h-3v-3h-3z" transform="translate(3,3)" fill="#fff"/><path d="M0 0h21v3h-3v3h-3v3h-3v3h-3v-3h-3v-3h-3v-3h-3z" fill="#a0a0a0"/></svg>
<div class="sunk" style="left:1483px;top:432px;width:312px;height:63px;background:#fff;"></div>
<div class="rais" style="left:1738px;top:438px;width:51px;height:51px;background:#f0f0f0;"></div>
<svg class="a" style="left:1753px;top:459px" width="21" height="12" shape-rendering="crispEdges"><path d="M0 0h21v3h-3v3h-3v3h-3v3h-3v-3h-3v-3h-3v-3h-3z" fill="#000"/></svg>
<div class="sunk" style="left:1483px;top:522px;width:312px;height:63px;background:#fff;"></div>
<div class="rais" style="left:1738px;top:528px;width:51px;height:51px;background:#f0f0f0;"></div>
<svg class="a" style="left:1753px;top:549px" width="21" height="12" shape-rendering="crispEdges"><path d="M0 0h21v3h-3v3h-3v3h-3v3h-3v-3h-3v-3h-3v-3h-3z" fill="#000"/></svg>
<div class="sunk" style="left:1483px;top:609px;width:312px;height:63px;background:#fff;"></div>
<div style="left:1489px;top:615px;width:249px;height:51px;background:#333;"></div>
<div style="left:1492px;top:618px;width:243px;height:45px;background:#fff;"></div>
<div class="rais" style="left:1738px;top:615px;width:51px;height:51px;background:#f0f0f0;"></div>
<svg class="a" style="left:1753px;top:636px" width="24" height="15" shape-rendering="crispEdges"><path d="M0 0h21v3h-3v3h-3v3h-3v3h-3v-3h-3v-3h-3v-3h-3z" transform="translate(3,3)" fill="#fff"/><path d="M0 0h21v3h-3v3h-3v3h-3v3h-3v-3h-3v-3h-3v-3h-3z" fill="#a0a0a0"/></svg>
<div class="sunk" style="left:1483px;top:696px;width:312px;height:63px;background:#fff;"></div>
<div class="rais" style="left:1738px;top:702px;width:51px;height:51px;background:#f0f0f0;"></div>
<svg class="a" style="left:1753px;top:723px" width="21" height="12" shape-rendering="crispEdges"><path d="M0 0h21v3h-3v3h-3v3h-3v3h-3v-3h-3v-3h-3v-3h-3z" fill="#000"/></svg>
<div class="sunk" style="left:1483px;top:795px;width:312px;height:63px;background:#fff;"></div>
<div style="left:1489px;top:801px;width:249px;height:51px;background:#333;"></div>
<div style="left:1492px;top:804px;width:243px;height:45px;background:#fff;"></div>
<div class="rais" style="left:1738px;top:801px;width:51px;height:51px;background:#f0f0f0;"></div>
<svg class="a" style="left:1753px;top:822px" width="24" height="15" shape-rendering="crispEdges"><path d="M0 0h21v3h-3v3h-3v3h-3v3h-3v-3h-3v-3h-3v-3h-3z" transform="translate(3,3)" fill="#fff"/><path d="M0 0h21v3h-3v3h-3v3h-3v3h-3v-3h-3v-3h-3v-3h-3z" fill="#a0a0a0"/></svg>
<div class="sunk" style="left:1483px;top:882px;width:312px;height:63px;background:#fff;"></div>
<div style="left:1489px;top:888px;width:249px;height:51px;background:#333;"></div>
<div style="left:1492px;top:891px;width:243px;height:45px;background:#fff;"></div>
<div class="rais" style="left:1738px;top:888px;width:51px;height:51px;background:#f0f0f0;"></div>
<svg class="a" style="left:1753px;top:909px" width="24" height="15" shape-rendering="crispEdges"><path d="M0 0h21v3h-3v3h-3v3h-3v3h-3v-3h-3v-3h-3v-3h-3z" transform="translate(3,3)" fill="#fff"/><path d="M0 0h21v3h-3v3h-3v3h-3v3h-3v-3h-3v-3h-3v-3h-3z" fill="#a0a0a0"/></svg>
<div class="sunk" style="left:913px;top:1170px;width:351px;height:63px;background:#fff;"></div>
<div class="rais" style="left:1207px;top:1176px;width:51px;height:51px;background:#f0f0f0;"></div>
<svg class="a" style="left:1222px;top:1197px" width="21" height="12" shape-rendering="crispEdges"><path d="M0 0h21v3h-3v3h-3v3h-3v3h-3v-3h-3v-3h-3v-3h-3z" fill="#000"/></svg>
<div class="sunk" style="left:913px;top:1242px;width:351px;height:63px;background:#fff;"></div>
<div class="rais" style="left:1207px;top:1248px;width:51px;height:51px;background:#f0f0f0;"></div>
<svg class="a" style="left:1222px;top:1269px" width="21" height="12" shape-rendering="crispEdges"><path d="M0 0h21v3h-3v3h-3v3h-3v3h-3v-3h-3v-3h-3v-3h-3z" fill="#000"/></svg>
<div class="sunk" style="left:1474px;top:1242px;width:351px;height:63px;background:#fff;"></div>
<div class="rais" style="left:1768px;top:1248px;width:51px;height:51px;background:#f0f0f0;"></div>
<svg class="a" style="left:1783px;top:1269px" width="21" height="12" shape-rendering="crispEdges"><path d="M0 0h21v3h-3v3h-3v3h-3v3h-3v-3h-3v-3h-3v-3h-3z" fill="#000"/></svg>
<div class="chk" style="left:913px;top:978px;width:36px;height:39px;background:#f0f0f0;"></div>
<svg class="a" style="left:922px;top:987px" width="21" height="21" shape-rendering="crispEdges"><path d="M18 0h3v3h-3zM15 3h3v3h-3zM18 3h3v3h-3zM0 6h3v3h-3zM12 6h3v3h-3zM15 6h3v3h-3zM18 6h3v3h-3zM0 9h3v3h-3zM3 9h3v3h-3zM9 9h3v3h-3zM12 9h3v3h-3zM15 9h3v3h-3zM0 12h3v3h-3zM3 12h3v3h-3zM6 12h3v3h-3zM9 12h3v3h-3zM12 12h3v3h-3zM3 15h3v3h-3zM6 15h3v3h-3zM9 15h3v3h-3zM6 18h3v3h-3z" fill="#a0a0a0"/></svg>
<div class="chk" style="left:997px;top:978px;width:36px;height:39px;background:#fff;"></div>
<svg class="a" style="left:1006px;top:987px" width="21" height="21" shape-rendering="crispEdges"><path d="M18 0h3v3h-3zM15 3h3v3h-3zM18 3h3v3h-3zM0 6h3v3h-3zM12 6h3v3h-3zM15 6h3v3h-3zM18 6h3v3h-3zM0 9h3v3h-3zM3 9h3v3h-3zM9 9h3v3h-3zM12 9h3v3h-3zM15 9h3v3h-3zM0 12h3v3h-3zM3 12h3v3h-3zM6 12h3v3h-3zM9 12h3v3h-3zM12 12h3v3h-3zM3 15h3v3h-3zM6 15h3v3h-3zM9 15h3v3h-3zM6 18h3v3h-3z" fill="#000"/></svg>
<div class="chk" style="left:1489px;top:975px;width:36px;height:39px;background:#fff;"></div>
<svg class="a" style="left:1498px;top:984px" width="21" height="21" shape-rendering="crispEdges"><path d="M18 0h3v3h-3zM15 3h3v3h-3zM18 3h3v3h-3zM0 6h3v3h-3zM12 6h3v3h-3zM15 6h3v3h-3zM18 6h3v3h-3zM0 9h3v3h-3zM3 9h3v3h-3zM9 9h3v3h-3zM12 9h3v3h-3zM15 9h3v3h-3zM0 12h3v3h-3zM3 12h3v3h-3zM6 12h3v3h-3zM9 12h3v3h-3zM12 12h3v3h-3zM3 15h3v3h-3zM6 15h3v3h-3zM9 15h3v3h-3zM6 18h3v3h-3z" fill="#000"/></svg>
<div class="chk" style="left:1579px;top:975px;width:36px;height:39px;background:#fff;"></div>
<svg class="a" style="left:1588px;top:984px" width="21" height="21" shape-rendering="crispEdges"><path d="M18 0h3v3h-3zM15 3h3v3h-3zM18 3h3v3h-3zM0 6h3v3h-3zM12 6h3v3h-3zM15 6h3v3h-3zM18 6h3v3h-3zM0 9h3v3h-3zM3 9h3v3h-3zM9 9h3v3h-3zM12 9h3v3h-3zM15 9h3v3h-3zM0 12h3v3h-3zM3 12h3v3h-3zM6 12h3v3h-3zM9 12h3v3h-3zM12 12h3v3h-3zM3 15h3v3h-3zM6 15h3v3h-3zM9 15h3v3h-3zM6 18h3v3h-3z" fill="#000"/></svg>
<div class="btn" style="left:628px;top:1419px;width:204px;height:69px;background:#f0f0f0;"></div>
<div class="btn" style="left:835px;top:1419px;width:204px;height:69px;background:#f0f0f0;"></div>
<div class="btn" style="left:1042px;top:1419px;width:204px;height:69px;background:#f0f0f0;"></div>
<div class="btn" style="left:1249px;top:1419px;width:204px;height:69px;background:#f0f0f0;"></div>
<div class="btn" style="left:1456px;top:1419px;width:204px;height:69px;background:#f0f0f0;"></div>
<span class="t" style="left:929.12px;top:282.37px;font-size:35px;line-height:35px;color:#000000;font-weight:400;transform:scaleX(0.9375);">1</span>
<span class="t" style="left:924.15px;top:366.37px;font-size:35px;line-height:35px;color:#000000;font-weight:400;transform:scaleX(0.9266);">H.265X</span>
<span class="t" style="left:927.14px;top:453.37px;font-size:35px;line-height:35px;color:#000000;font-weight:400;transform:scaleX(0.8578);">3M</span>
<span class="t" style="left:927.07px;top:540.37px;font-size:35px;line-height:35px;color:#000000;font-weight:400;transform:scaleX(0.9324);">25</span>
<span class="t" style="left:928.00px;top:630.37px;font-size:35px;line-height:35px;color:#757575;font-weight:400;transform:scaleX(0.8063);">VBR</span>
<span class="t" style="left:928.00px;top:717.37px;font-size:35px;line-height:35px;color:#000000;font-weight:400;transform:scaleX(0.9089);">Worse</span>
<span class="t" style="left:927.06px;top:813.37px;font-size:35px;line-height:35px;color:#757575;font-weight:400;transform:scaleX(0.9417);">3072</span>
<span class="t" style="left:927.00px;top:906.37px;font-size:35px;line-height:35px;color:#757575;font-weight:400;transform:scaleX(1.0000);">2</span>
<span class="t" style="left:1491.06px;top:447.37px;font-size:35px;line-height:35px;color:#000000;font-weight:400;transform:scaleX(0.9691);">D1</span>
<span class="t" style="left:1494.04px;top:537.37px;font-size:35px;line-height:35px;color:#000000;font-weight:400;transform:scaleX(0.9598);">25</span>
<span class="t" style="left:1494.00px;top:624.37px;font-size:35px;line-height:35px;color:#757575;font-weight:400;transform:scaleX(0.8063);">VBR</span>
<span class="t" style="left:1495.00px;top:711.37px;font-size:35px;line-height:35px;color:#000000;font-weight:400;transform:scaleX(0.9190);">Worse</span>
<span class="t" style="left:1494.05px;top:810.37px;font-size:35px;line-height:35px;color:#757575;font-weight:400;transform:scaleX(0.9476);">768</span>
<span class="t" style="left:1494.00px;top:897.37px;font-size:35px;line-height:35px;color:#757575;font-weight:400;transform:scaleX(1.0000);">2</span>
<span class="t" style="left:920.09px;top:1185.37px;font-size:35px;line-height:35px;color:#000000;font-weight:400;transform:scaleX(0.9538);">high profile</span>
<span class="t" style="left:920.15px;top:1257.37px;font-size:35px;line-height:35px;color:#000000;font-weight:400;transform:scaleX(0.9266);">H.265X</span>
<span class="t" style="left:1482.16px;top:1257.37px;font-size:35px;line-height:35px;color:#000000;font-weight:400;transform:scaleX(0.9179);">H.265X</span>
<span class="t" style="left:688.05px;top:1434.37px;font-size:35px;line-height:35px;color:#000000;font-weight:400;transform:scaleX(0.9482);">Copy</span>
<span class="t" style="left:890.09px;top:1434.37px;font-size:35px;line-height:35px;color:#000000;font-weight:400;transform:scaleX(0.9531);">Paste</span>
<span class="t" style="left:1082.07px;top:1434.37px;font-size:35px;line-height:35px;color:#000000;font-weight:400;transform:scaleX(0.9657);">Refresh</span>
<span class="t" style="left:1328.13px;top:1434.37px;font-size:35px;line-height:35px;color:#000000;font-weight:400;transform:scaleX(0.8736);">OK</span>
<span class="t" style="left:1508.10px;top:1434.37px;font-size:35px;line-height:35px;color:#000000;font-weight:400;transform:scaleX(0.9042);">Cancel</span>
<div style="left:916px;top:501px;width:351px;height:45px;background:#0078d7;box-shadow:inset 0 0 0 3px #696969"></div>
<span class="t" style="left:925.14px;top:507.37px;font-size:35px;line-height:35px;color:#ffffff;font-weight:400;transform:scaleX(0.8578);">3M</span>
<div style="left:2062px;top:0px;width:15px;height:230px;background:linear-gradient(#fff 0%,#fff 9%,#e0e0e0 13%,#c4c4c4 20%,#b2b2b2 27%,#bcbcbc 38%,#cccccc 46%,#dadada 58%,#e2e2e2 72%,#f6f6f6 80%,#e0e0e0 88%,#dcdcdc 100%);"></div>
<svg class="a" style="left:2062px;top:0" width="15" height="30"><path d="M0 13 L15 -2 L15 9 L3 24 L0 24z" fill="#000"/></svg>
<svg class="a" style="left:2062px;top:178" width="15" height="30"><path d="M0 4 L15 20 L15 26 L0 10z" fill="#a0a0a0"/></svg>
<div style="left:2062px;top:228px;width:15px;height:3px;background:#e8e8e8;"></div>
<div style="left:2062px;top:231px;width:15px;height:6px;background:linear-gradient(#a4a4a4,#888);"></div>
<div style="left:2062px;top:237px;width:15px;height:3px;background:#d8d8d8;"></div>
<div style="left:2062px;top:240px;width:15px;height:9px;background:linear-gradient(#fff,#e8e8e8);"></div>
<div style="left:2062px;top:249px;width:15px;height:51px;background:#000;"></div>
<div style="left:2062px;top:258px;width:15px;height:3px;background:#d0d0d0;"></div>
<div style="left:2062px;top:300px;width:15px;height:9px;background:#c8c8c8;"></div>
<div style="left:2062px;top:309px;width:15px;height:3px;background:#a8a8a8;"></div>
<div style="left:2062px;top:312px;width:15px;height:3px;background:#808080;"></div>
<div style="left:2062px;top:315px;width:15px;height:3px;background:#d0d0d0;"></div>
<div style="left:2062px;top:318px;width:15px;height:27px;background:linear-gradient(#fff,#e0e2e8);"></div>
<div style="left:2062px;top:345px;width:15px;height:39px;background:linear-gradient(#c8ccd4,#d4d8e0);"></div>
<div style="left:2062px;top:384px;width:15px;height:3px;background:#484c60;"></div>
<div style="left:2062px;top:387px;width:15px;height:853px;background:linear-gradient(#cdd0d6,#cdd0d6 35%,#c4c6cc 60%,#b0b2b6 82%,#9c9c9e);"></div>
<div style="left:2062px;top:1240px;width:15px;height:97px;background:linear-gradient(#fff,#e4e4e6);"></div>
<div style="left:2062px;top:1337px;width:15px;height:97px;background:linear-gradient(#b0b0b0 0,#b0b0b0 3px,#fff 3px,#e4e4e6);"></div>
<div style="left:2062px;top:1434px;width:15px;height:99px;background:linear-gradient(#b0b0b0 0,#b0b0b0 3px,#fff 3px,#e4e4e6);"></div>
<div style="left:2062px;top:1533px;width:15px;height:80px;background:linear-gradient(#b0b0b0 0,#b0b0b0 3px,#fff 3px,#e4e4e6);"></div>
<div style="left:2062px;top:1240px;width:15px;height:3px;background:#d8d8dc;"></div>
<div style="left:2065px;top:1265px;width:12px;height:57px;background:#3a50b0;border-radius:12px 0 0 12px"></div>
<div style="left:2068px;top:1267px;width:9px;height:20px;background:#30b040;border-radius:8px 0 0 0"></div>
<div style="left:2071px;top:1300px;width:6px;height:9px;background:#d04030;"></div>
<div style="left:2062px;top:1359px;width:15px;height:18px;background:#e03030;border-radius:14px 0 0 0"></div>
<div style="left:2062px;top:1376px;width:15px;height:42px;background:#1080e0;border-radius:0 0 0 14px"></div>
<div style="left:2062px;top:1448px;width:15px;height:15px;background:#18a8e8;"></div>
<div style="left:2065px;top:1463px;width:12px;height:40px;background:linear-gradient(#f4f4f4,#c0c0c0 70%,#606060);"></div>
<div style="left:2062px;top:1503px;width:15px;height:18px;background:#1070a0;"></div>
<div style="left:2062px;top:1555px;width:15px;height:18px;background:#c0c0c0;"></div>
<div style="left:2065px;top:1560px;width:12px;height:6px;background:#fff;"></div>
<div style="left:2065px;top:1575px;width:12px;height:38px;background:#f06068;"></div>
</body></html>
